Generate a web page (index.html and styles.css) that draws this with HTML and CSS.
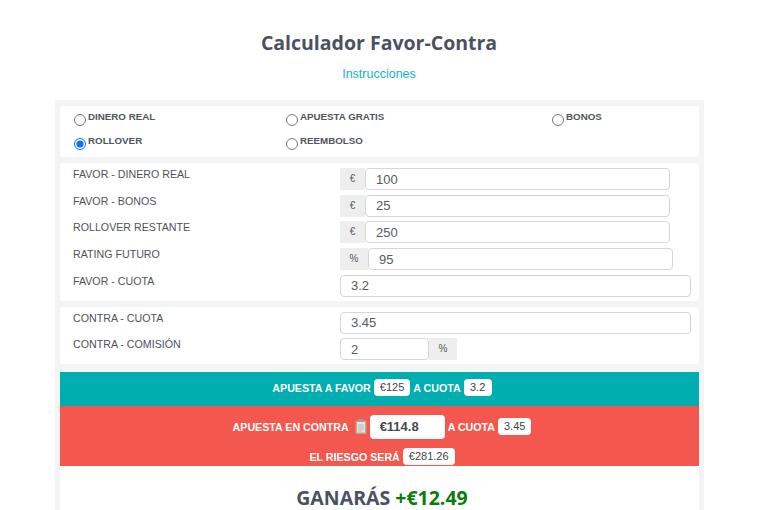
FILE: index.html
```html
<!DOCTYPE html>
<html lang="es">
<head>
<meta charset="UTF-8">
<meta name="viewport" content="width=device-width, initial-scale=1.0">
<title>Calculador Favor-Contra</title>
<link rel="stylesheet" href="styles.css">
</head>
<body>

<h1>Calculador Favor-Contra</h1>
<p class="instrucciones"><a href="#">Instrucciones</a></p>

<div class="calculador">
  <div class="card tipos">
    <label class="tipo"><input type="radio" name="tipo"><span>Dinero real</span></label>
    <label class="tipo"><input type="radio" name="tipo"><span>Apuesta gratis</span></label>
    <label class="tipo"><input type="radio" name="tipo"><span>Bonos</span></label>
    <label class="tipo"><input type="radio" name="tipo" checked><span>Rollover</span></label>
    <label class="tipo"><input type="radio" name="tipo"><span>Reembolso</span></label>
  </div>

  <div class="card campos">
    <div class="fila">
      <label for="favorReal">Favor - Dinero real</label>
      <div class="grupo"><span class="addon">€</span><input type="text" id="favorReal" value="100"></div>
    </div>
    <div class="fila">
      <label for="favorBonos">Favor - Bonos</label>
      <div class="grupo"><span class="addon">€</span><input type="text" id="favorBonos" value="25"></div>
    </div>
    <div class="fila">
      <label for="rollover">Rollover restante</label>
      <div class="grupo"><span class="addon">€</span><input type="text" id="rollover" value="250"></div>
    </div>
    <div class="fila">
      <label for="rating">Rating futuro</label>
      <div class="grupo"><span class="addon addon-pct">%</span><input type="text" id="rating" value="95"></div>
    </div>
    <div class="fila">
      <label for="favorCuota">Favor - Cuota</label>
      <input type="text" class="solo" id="favorCuota" value="3.2">
    </div>
  </div>

  <div class="card campos">
    <div class="fila">
      <label for="contraCuota">Contra - Cuota</label>
      <input type="text" class="solo" id="contraCuota" value="3.45">
    </div>
    <div class="fila">
      <label for="comision">Contra - Comisión</label>
      <div class="grupo grupo-corto"><input type="text" id="comision" value="2"><span class="addon addon-pct">%</span></div>
    </div>
  </div>

  <div class="resultado favor">
    <div class="linea"><span>Apuesta a favor</span><span class="valor">€125</span><span>a cuota</span><span class="valor valor-min">3.2</span></div>
  </div>

  <div class="resultado contra">
    <div class="linea">
      <span>Apuesta en contra</span>
      <svg class="copiar" width="12" height="15" viewBox="0 0 12 15">
        <rect x="0.500" y="1.500" width="11" height="13.500" rx="1" fill="#c4a487"/>
        <rect x="2" y="3" width="8" height="10.500" fill="#e4e6e2"/>
        <rect x="3.500" y="0" width="5" height="3" rx="1" fill="#9aa09c"/>
        <path d="M3 6h6M3 8h6M3 10h6M3 12h4" stroke="#b4b9b6" stroke-width="1"/>
      </svg>
      <span class="valor valor-grande">€114.8</span><span>a cuota</span><span class="valor">3.45</span>
    </div>
    <div class="linea"><span>El riesgo será</span><span class="valor">€281.26</span></div>
  </div>

  <div class="ganancia">
    <h2>Ganarás <span class="positivo">+€12.49</span></h2>
  </div>
</div>

</body>
</html>
```

FILE: styles.css
```css
html {
  overflow: hidden;
}
body {
  font-family: 'Liberation Sans', Arial, sans-serif;
  background-color: #fff;
  color: #495057;
  margin: 0;
  padding: 0;
}
h1 {
  font-family: 'Open Sans', sans-serif;
  font-size: 19.5px;
  line-height: 27px;
  font-weight: 700;
  text-align: center;
  color: #4a5262;
  margin: 0;
  padding: 29px 2px 0 0;
}
.instrucciones {
  font-size: 12.5px;
  line-height: 14px;
  text-align: center;
  margin: 11px 0 19px;
  padding-right: 2px;
}
.instrucciones a {
  color: #17b1c4;
  text-decoration: none;
}
.calculador {
  background-color: #f3f4f4;
  margin: 0 56px 0 55px;
  padding: 6px 5px 0;
}
.card {
  background-color: #fff;
  border-radius: 3px;
  margin-bottom: 6px;
}
.tipos {
  display: grid;
  grid-template-columns: 212px 266px 1fr;
  row-gap: 5px;
  padding: 5px 0 3px 14px;
  height: 43px;
}
.tipo {
  display: flex;
  align-items: flex-start;
  height: 19px;
  font-size: 9.750px;
  line-height: 12px;
  font-weight: 700;
  text-transform: uppercase;
  color: #50555c;
}
.tipo input {
  width: 12px;
  height: 12px;
  margin: 3px 2px 0 0;
}
.campos {
  padding: 5px 8px 4px 13px;
}
.fila {
  display: flex;
  align-items: flex-start;
  height: 26.7px;
}
.fila:last-child {
  height: 22px;
}
.fila label {
  width: 267px;
  font-size: 10.660px;
  line-height: 12px;
  text-transform: uppercase;
  color: #4f5359;
}
.grupo {
  display: flex;
}
.grupo input {
  width: 305px;
  height: 22px;
  box-sizing: border-box;
}
.grupo-corto input {
  width: 89px;
}
input[type="text"] {
  font-family: 'Liberation Sans', Arial, sans-serif;
  font-size: 13px;
  color: #555b61;
  background-color: #fff;
  border: 1px solid #d4d6d8;
  border-radius: 4px;
  padding: 0 10px;
  margin: 0;
  outline: none;
}
.solo {
  width: 351px;
  height: 22px;
  box-sizing: border-box;
}
.addon {
  width: 25px;
  height: 22px;
  background-color: #eee;
  color: #555b61;
  font-size: 10px;
  line-height: 22px;
  text-align: center;
}
.addon-pct {
  width: 28px;
}
.resultado {
  color: #fff;
  font-size: 10.660px;
  font-weight: 700;
  text-transform: uppercase;
  text-align: center;
}
.favor {
  background-color: #00aeb0;
  padding: 4px 0 6px;
  margin-top: 7.5px;
  height: 24px;
}
.contra {
  background-color: #f3574d;
  height: 60px;
  padding-top: 9px;
  box-sizing: border-box;
}
.linea {
  display: flex;
  justify-content: center;
  align-items: center;
  gap: 3px;
  height: 24px;
  padding-left: 5px;
}
.contra .linea + .linea {
  margin-top: 9px;
  height: 18px;
}
.valor {
  background-color: #fff;
  color: #3f444a;
  border-radius: 4px;
  font-size: 11px;
  line-height: 15px;
  padding: 1px 6px;
  text-transform: none;
  font-weight: 400;
}
.valor-min {
  min-width: 28px;
  box-sizing: border-box;
}
.valor-grande {
  width: 75px;
  height: 24px;
  box-sizing: border-box;
  font-size: 13px;
  line-height: 24px;
  padding: 0 0 0 10px;
  text-align: left;
  font-weight: 700;
  color: #444a50;
}
.copiar {
  margin-left: 3px;
}
.ganancia {
  background-color: #fff;
  padding: 21px 0 2px 5px;
  text-align: center;
}
.ganancia h2 {
  font-family: 'Open Sans', sans-serif;
  font-size: 19.5px;
  line-height: 21px;
  font-weight: 700;
  text-transform: uppercase;
  color: #4a5262;
  margin: 0;
}
.positivo {
  color: #0a7d0a;
}
```
